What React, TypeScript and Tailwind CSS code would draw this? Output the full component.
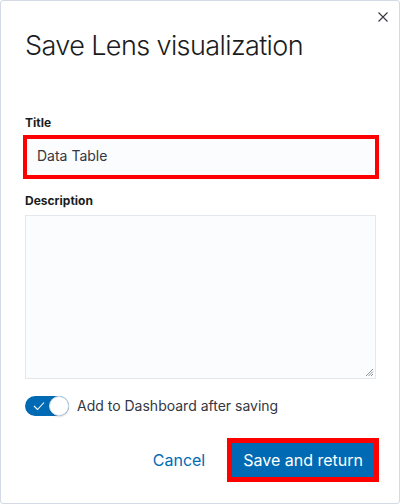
import React from "react";

export default function App() {
  return (
    <div
      className="relative w-[400px] h-[504px] bg-white border border-[#d3dae6] rounded-[3px] text-[#343741]"
      style={{ fontFamily: "Inter, 'Noto Sans', sans-serif" }}
    >
      <button className="absolute top-[10px] right-[10px] w-[12px] h-[12px] flex items-center justify-center">
        <svg width="12" height="12" viewBox="0 0 12 12">
          <path d="M1.5 1.5 L10.5 10.5 M10.5 1.5 L1.5 10.5" stroke="#343741" strokeWidth="1.1" fill="none" />
        </svg>
      </button>

      <div className="flex flex-col pl-[24px] pr-[23px]">
        <h1 className="pt-[27px] text-[27px] leading-[36px] font-light text-[#1a1c21] tracking-[-0.6px]">
          Save Lens visualization
        </h1>

        <label className="mt-[51px] text-[12px] leading-[16px] font-bold text-[#1a1c21]">Title</label>
        <div className="mt-[4px] ml-[-2px] mr-[-3px] h-[44px] border-[4px] border-[#ff0000] bg-[#fbfcfd] flex items-center pl-[10px] pb-[3px] text-[14px] text-[#343741]">
          Data Table
        </div>

        <label className="mt-[14px] text-[12px] leading-[16px] font-bold text-[#1a1c21]">Description</label>
        <div className="relative mt-[6px] h-[164px] border border-[#e3e7ee] bg-[#fbfcfd]">
          <svg className="absolute right-[1px] bottom-[1px]" width="10" height="10" viewBox="0 0 10 10">
            <path d="M9 2 L2 9 M9 4.5 L4.5 9 M9 7 L7 9" stroke="#8f94a0" strokeWidth="1" fill="none" />
          </svg>
        </div>

        <div className="mt-[17px] flex items-center gap-[8px]">
          <div className="relative w-[44px] h-[20px] rounded-full bg-[#006bb4]">
            <svg className="absolute left-[8px] top-[5px]" width="12" height="10" viewBox="0 0 12 10">
              <path d="M1 5 L4.5 8.5 L11 1.5" stroke="#ffffff" strokeWidth="1.1" fill="none" />
            </svg>
            <div className="absolute right-0 top-0 w-[20px] h-[20px] rounded-full bg-white border border-[#d3dae6] shadow-[0_1px_2px_rgba(0,0,0,0.15)]" />
          </div>
          <span className="text-[14px] leading-[20px] text-[#343741]">Add to Dashboard after saving</span>
        </div>

        <div className="mt-[22px] flex items-center justify-end gap-[22px] mr-[-3px]">
          <button className="text-[16px] text-[#006bb4]">Cancel</button>
          <div className="border-[5px] border-[#ff0000]">
            <button className="h-[34px] px-[11px] bg-[#006bb4] text-white text-[16px] leading-[20px]">
              Save and return
            </button>
          </div>
        </div>
      </div>
    </div>
  );
}
